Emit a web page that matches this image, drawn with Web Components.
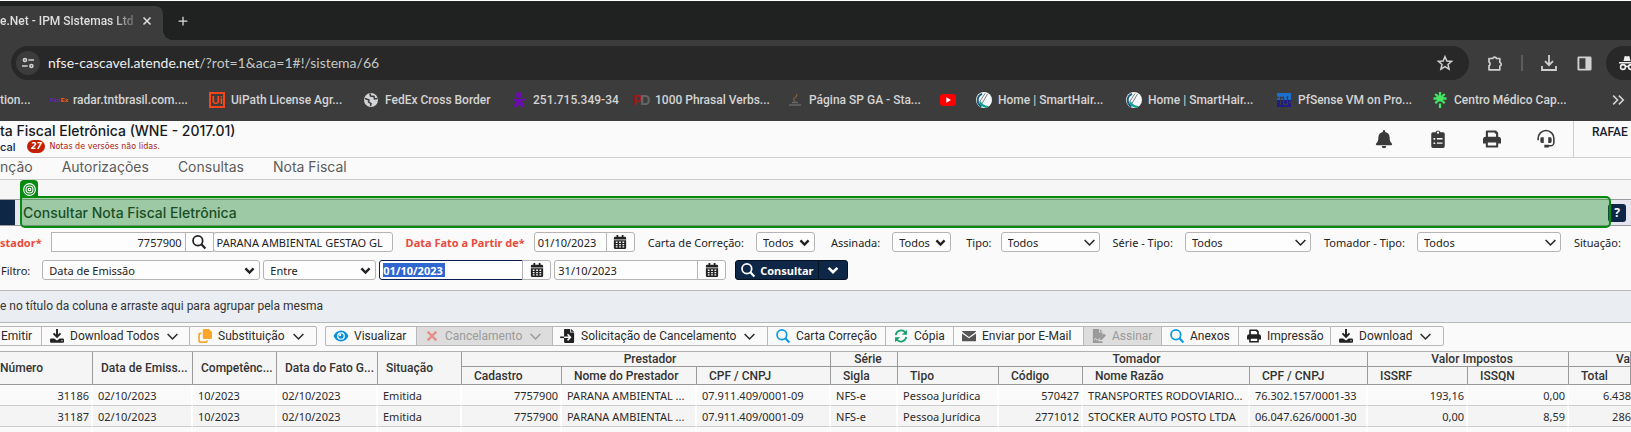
<!DOCTYPE html>
<html lang="pt-BR">
<head>
<meta charset="utf-8">
<title>Atende.Net - IPM Sistemas Ltda</title>
<style>
body{margin:0;background:#fafafa;overflow:hidden;font-family:"Noto Sans",sans-serif}
</style>
</head>
<body>
<app-window></app-window>
<script>
const ICONS = {
  close:'<path d="M4 4l8 8M12 4l-8 8" stroke="currentColor" stroke-width="1.8" fill="none"/>',
  plus:'<path d="M8 1v14M1 8h14" stroke="currentColor" stroke-width="2" fill="none"/>',
  tune:'<g fill="none" stroke="currentColor" stroke-width="2.200"><circle cx="4" cy="4" r="2"/><path d="M8.500 4H16M0 12h7.500"/><circle cx="12.500" cy="12" r="2"/></g>',
  star:'<path d="M8 1.700l1.900 4.300 4.700.4-3.600 3.100 1.100 4.600L8 11.700l-4.100 2.400L5 9.500 1.400 6.400l4.700-.4z" fill="none" stroke="currentColor" stroke-width="1.500"/>',
  puzzle:'<path d="M2 3.500h3.800a1.900 1.900 0 0 1 3.700 0h3.300v4a1.900 1.900 0 0 1 0 3.700v3.600H2v-4a2.200 2.200 0 0 0 0-3.800z" fill="none" stroke="currentColor" stroke-width="1.700" stroke-linejoin="round"/>',
  tray:'<path d="M8 0v10M4 6.200l4 4 4-4M1 11v4h14V11" fill="none" stroke="currentColor" stroke-width="1.800"/>',
  panel:'<path fill-rule="evenodd" d="M2 .5h12a1.500 1.500 0 0 1 1.500 1.500v12a1.500 1.500 0 0 1-1.500 1.500H2A1.500 1.500 0 0 1 .5 14V2A1.500 1.500 0 0 1 2 .5zm.5 2v11H9v-11z" fill="currentColor"/>',
  spy:'<path d="M4.500 6l1-4.500q.3-.8 1.200-.5L8 1.500 9.300 1q.9-.3 1.200.5l1 4.500zM0 7h16v1.500H0z" fill="currentColor"/><g fill="none" stroke="currentColor" stroke-width="1.600"><circle cx="4" cy="12" r="2.400"/><circle cx="12" cy="12" r="2.400"/><path d="M6.400 11.700q1.600-1 3.200 0"/></g>',
  globe:'<circle cx="8" cy="8" r="7" fill="#d2d4d7"/><path d="M2 6.500l4 1.500-.5 2 2.500 1.500L7.500 14M7 1.500L7.500 4l3.500.5.500 2.500 3-.5" fill="none" stroke="#3c3c3c" stroke-width="1.500"/>',
  person:'<g fill="#6a0dad"><circle cx="8" cy="3" r="3"/><path d="M2.500 6.200L6 7h4l3.500-.8.800 1.600L11 9.500l2.500 4.500-2.300 1.700L8 12.500l-3.200 3.200L2.500 14 5 9.500 1.700 7.800z"/></g>',
  java:'<path d="M9.500 2q1 2-1.500 3.500t0 4" stroke="#7c6440" fill="none" stroke-width="1.200"/><path d="M5 10.500h6M2 13h12" stroke="#66666a" fill="none" stroke-width="1.300"/>',
  tube:'<rect y="2" width="16" height="12" rx="3" fill="#f00"/><path d="M6.300 5.300v5.400L11 8z" fill="#fff"/>',
  comb:'<circle cx="8" cy="8" r="8" fill="#f5f8f9"/><path d="M5.500 14.500A7 7 0 0 1 6 1.800" fill="none" stroke="#1c5b7c" stroke-width="2"/><path d="M9 1.500L3.500 10M11.500 2L6 11.500" stroke="#777f88" stroke-width="1" fill="none"/><path d="M4 10q2 4.500 8 5" fill="none" stroke="#0aa093" stroke-width="2"/>',
  pf:'<path d="M1 1h14v7H1z" fill="#1b6fd0"/><path d="M1 8h14v7H1z" fill="#1e1a8c"/><path d="M4.500 13V5.500h3v7h4V4M1 5.500h2M13 10.500h2" stroke="#3c3c3c" stroke-width="1.400" fill="none"/>',
  flower:'<path d="M8 0v9.500M8 11.500V16M1.500 6.500h13M3.300 2l9.400 9.200M12.700 2l-9.400 9.200" stroke="#43e660" stroke-width="2.300" fill="none"/>',
  more:'<path d="M2.500 3L7.500 8l-5 5M9 3l5 5-5 5" fill="none" stroke="currentColor" stroke-width="1.800"/>',
  bell:'<path d="M8 0a1 1 0 0 1 1 1v.7c2.600.4 4 2.300 4 5 0 3 .8 4.300 2.200 5.500q.3 1-.7 1.300H1.500q-1-.3-.7-1.300C2.200 11 3 9.700 3 6.700c0-2.700 1.400-4.600 4-5V1a1 1 0 0 1 1-1zM6 14.300h4a2 2 0 0 1-4 0z" fill="currentColor"/>',
  clip:'<path fill-rule="evenodd" d="M3.500 2H5.800a2.300 2.300 0 0 1 4.400 0h2.300A1.500 1.500 0 0 1 14 3.500v11a1.500 1.500 0 0 1-1.500 1.500h-9A1.500 1.500 0 0 1 2 14.500v-11A1.500 1.500 0 0 1 3.500 2zM8 1.400a1 1 0 1 0 0 2 1 1 0 0 0 0-2zM4 7.200v1.500h1.500V7.200zm3 0v1.200h5V7.200zM4 11v1.500h1.500V11zm3 0v1.200h5V11z" fill="currentColor"/>',
  print:'<path fill-rule="evenodd" d="M2.500 6V1.500A1 1 0 0 1 3.500 .5h8L13.500 2.500V6A2.500 2.500 0 0 1 16 8.500V12h-2.500v3.500H2.500V12H0V8.500A2.500 2.500 0 0 1 2.500 6zm1.900-3.800V6h7.200V3.700L10 2.200zM4.300 11v2.700h7.400V11z" fill="currentColor"/>',
  headset:'<path d="M1 9V7.500a7 7 0 0 1 14 0V11a3 3 0 0 1-3 3H9" fill="none" stroke="currentColor" stroke-width="1.400"/><path d="M4.300 6.500H6v5H4.300A1.300 1.300 0 0 1 3 10.200V7.800a1.300 1.300 0 0 1 1.300-1.300zM10 6.500h1.700A1.300 1.300 0 0 1 13 7.800v2.400a1.300 1.300 0 0 1-1.300 1.300H10zM6.500 13h4v2.500h-4z" fill="currentColor"/>',
  target:'<g fill="none" stroke="currentColor" stroke-width="1.400"><circle cx="8" cy="8" r="7.200"/><circle cx="8" cy="8" r="4.300"/><circle cx="8" cy="8" r="1.600"/></g>',
  search:'<g fill="none" stroke="currentColor" stroke-width="2"><circle cx="6.700" cy="6.500" r="5.500"/><path d="M10.700 10.500L15.300 15.300" stroke-width="2.500"/></g>',
  calendar:'<path fill-rule="evenodd" d="M4 0h2v2h4V0h2v2h1.500A1.500 1.500 0 0 1 15 3.500V5H1V3.500A1.500 1.500 0 0 1 2.500 2H4zM1 6h14v8.500a1.500 1.500 0 0 1-1.500 1.500h-11A1.500 1.500 0 0 1 1 14.500zm2.200 1.500v1.600h2V7.500zm3.800 0v1.600h2V7.500zm3.800 0v1.600h2V7.500zM3.200 10.200v1.500h2v-1.500zm3.800 0v1.500h2v-1.500zm3.800 0v1.500h2v-1.500zM3.200 12.800v1.500h2v-1.500zm3.800 0v1.500h2v-1.500zm3.800 0v1.500h2v-1.500z" fill="currentColor"/>',
  chevron:'<path d="M2 5l6 6 6-6" fill="none" stroke="currentColor" stroke-width="1.900"/>',
  boldchevron:'<path d="M3 5.500L8 10.500 13 5.500" fill="none" stroke="currentColor" stroke-width="3"/>',
  download:'<path d="M8 0v8.500M4 5l4 4 4-4" fill="none" stroke="currentColor" stroke-width="2.200"/><path fill-rule="evenodd" d="M1.500 10.800h3.300L8 13l3.200-2.200h3.300A1.500 1.500 0 0 1 16 12.300v2.200a1.300 1.300 0 0 1-1.300 1.300H1.300A1.300 1.300 0 0 1 0 14.500v-2.200a1.500 1.500 0 0 1 1.500-1.500zm11.500 2v1.200h1.400v-1.200z" fill="currentColor"/>',
  copy:'<path d="M7 0h5.500L16 3.500V10a1.500 1.500 0 0 1-1.500 1.500H7A1.500 1.500 0 0 1 5.500 10V1.500A1.500 1.500 0 0 1 7 0z" fill="currentColor"/><path d="M4 5H2.800A1.500 1.500 0 0 0 1.200 6.500v7A1.500 1.500 0 0 0 2.800 15H9a1.300 1.300 0 0 0 1.300-1.500V13" fill="none" stroke="currentColor" stroke-width="1.900"/>',
  eye:'<path d="M8 1.800c3.700 0 7 2.500 8.500 6.200-1.500 3.700-4.800 6.200-8.500 6.200S1 11.700-.5 8C1 4.300 4.300 1.800 8 1.800z" fill="currentColor"/><circle cx="8" cy="8" r="4.400" fill="#fff"/><circle cx="8" cy="8" r="3" fill="currentColor"/><circle cx="7" cy="7" r="1.200" fill="#fff"/>',
  cross:'<path d="M3 3l10 10M13 3L3 13" stroke="currentColor" stroke-width="2.600" fill="none"/>',
  fileimport:'<path d="M4 0h6.500v4H15v10.500a1.500 1.500 0 0 1-1.500 1.500h-9A1.500 1.500 0 0 1 3.500 14.500V.8Q3.500 0 4 0zM11.500 0L15 3.200h-3.500z" fill="currentColor"/><path d="M3.500 9.500h7M7.500 6l3.300 3.500L7.500 13" fill="none" stroke="#fafafa" stroke-width="1.700"/><path d="M-1 9.500h4.500" stroke="currentColor" stroke-width="1.800"/>',
  sync:'<path d="M2 7a6.200 6.200 0 0 1 11-3M14 9a6.200 6.200 0 0 1-11 3" fill="none" stroke="currentColor" stroke-width="2"/><path d="M14.800.8v5.700H9zM1.200 15.200V9.500H7z" fill="currentColor"/>',
  mail:'<path d="M0 3.200Q0 2.200 1 2.200h14q1 0 1 1L8 9zM0 5l8 5.700L16 5v8q0 1-1 1H1q-1 0-1-1z" fill="currentColor"/>',
  sign:'<path d="M1 0h7v4h4v3L7.500 11.500V14H12v2H1zM9 0l3 3H9z" fill="currentColor"/><path d="M2.500 12.500l1.500-2 1.200 2h2" stroke="#ddd" fill="none"/><path d="M13.500 5L16 7.500l-5 5H8.800v-2.300z" fill="currentColor"/>'
};

/* Registers an element whose shadow root is cloned from a template; {{name}} is replaced by the attribute value. */
function element(name, markup) {
  customElements.define(name, class extends HTMLElement {
    connectedCallback() {
      if (this.shadowRoot) return;
      const t = document.createElement('template');
      t.innerHTML = '<style>*{box-sizing:border-box}</style>' +
        markup.replace(/\{\{([\w-]+)\}\}/g, (_, a) => this.getAttribute(a) || '');
      this.attachShadow({mode: 'open'}).append(t.content.cloneNode(true));
    }
  });
}

customElements.define('ui-icon', class extends HTMLElement {
  connectedCallback() {
    if (this.shadowRoot) return;
    this.attachShadow({mode: 'open'}).innerHTML =
      '<style>:host{display:inline-flex;flex:none;width:16px;height:16px}svg{width:100%;height:100%;overflow:visible}</style>' +
      '<svg viewBox="0 0 16 16" aria-hidden="true">' + (ICONS[this.getAttribute('name')] || '') + '</svg>';
  }
});

element('browser-tabs', `<style>
:host{display:flex;height:40px;border-top:1px solid #fff;background:#202221;color:#dedede;padding-top:5px;font:500 12px Roboto,sans-serif}
.tab{position:relative;width:163px;display:flex;align-items:center;justify-content:space-between;background:#3c3c3c;border-radius:0 8px 0 0;padding:0 9px 5px 0}
.tab::after{content:"";position:absolute;left:100%;bottom:0;width:10px;height:10px;background:radial-gradient(circle at 100% 0,transparent 10px,#3c3c3c 10px)}
.name{flex:none;white-space:nowrap;-webkit-mask:linear-gradient(90deg,#000 84%,#0004);mask:linear-gradient(90deg,#000 84%,#0004)}
button{border:0;padding:0;margin:0;background:none;color:inherit;display:flex}
.x ui-icon{width:14px;height:14px}
.new{align-self:center;margin:0 0 5px 15px}.new ui-icon{width:10px;height:10px}
</style><div class="tab"><span class="name">e.Net - IPM Sistemas Ltd</span><button class="x" aria-label="Fechar guia"><ui-icon name="close"></ui-icon></button></div>
<button class="new" aria-label="Nova guia"><ui-icon name="plus"></ui-icon></button>`);

element('browser-address', `<style>
:host{display:flex;height:40px;align-items:flex-end;background:#3c3c3c;color:#d0d0d0;padding-left:11px;overflow:hidden}
.box{flex:1;display:flex;align-items:center;height:34px;border-radius:17px;background:#282828;padding:0 16px 0 5px}
.site{flex:none;width:24px;height:24px;border-radius:50%;background:#3c3c3c;display:flex;align-items:center;justify-content:center;margin-right:8px}
.site ui-icon{width:12px;height:12px}
.url{flex:1;font:14px/18px Lato,sans-serif;white-space:nowrap;color:#c4c7c5;padding-bottom:1px}.url b{font-weight:400;color:#eee}
button{border:0;padding:0;background:none;color:inherit;display:flex;flex:none}
.tools{flex:none;display:flex;align-items:center;height:34px;width:162px;padding-left:18px}
.tools i{flex:none;width:2px;height:16px;background:#5c5c5c;margin:0 18px}
.inc{margin-left:14px;width:60px;flex:none;height:34px;border-radius:17px;background:#282828;display:flex;align-items:center;padding-left:13px;color:#eee}
.gap{margin-left:20px}.gap ui-icon{width:15px;height:15px}
</style><div class="box"><button class="site" aria-label="Informações do site"><ui-icon name="tune"></ui-icon></button>
<span class="url"><b>nfse-cascavel.atende.net</b>/?rot=1&amp;aca=1#!/sistema/66</span><button aria-label="Favorito"><ui-icon name="star"></ui-icon></button></div>
<div class="tools"><button aria-label="Extensões"><ui-icon name="puzzle"></ui-icon></button><i></i><button aria-label="Downloads"><ui-icon name="tray"></ui-icon></button>
<button class="gap" aria-label="Painel lateral"><ui-icon name="panel"></ui-icon></button><div class="inc"><ui-icon name="spy"></ui-icon></div></div>`);

element('book-mark', `<style>
:host{display:flex;align-items:center;white-space:nowrap;overflow:hidden}
a{display:flex;align-items:center;gap:6px;color:inherit;text-decoration:none}
</style><a href="#"><slot name="icon"><ui-icon name="{{icon}}"></ui-icon></slot><slot></slot></a>`);

element('bookmark-bar', `<style>
:host{display:grid;grid-template-columns:50px 159px 154px 148px 122px 154px 153px 36px 150px 150px 156px minmax(0,1fr) auto;height:41px;padding-bottom:1px;background:#3c3c3c;color:#d4d4d4;font:500 12px Roboto,sans-serif}
.fx{width:17px;font:700 6px "Liberation Sans",sans-serif;color:#6a25b5}.fx b{color:#f60}
.ui{width:16px;height:16px;border:2px solid #fa4616;color:#fa4616;font:700 11px/12px "Liberation Sans",sans-serif;text-align:center}
.pd{width:16px;font:700 14px "Liberation Sans",sans-serif;color:#a01818;display:flex}.pd b{color:#666;margin-left:-2px}
button{border:0;background:none;color:inherit;padding:0;margin-right:6px;align-self:center;display:flex}button ui-icon{width:14px;height:14px}
.cut{margin-left:-6px}
</style><book-mark><span slot="icon"></span><span class="cut">tion...</span></book-mark>
<book-mark><span slot="icon" class="fx">Fed<b>Ex</b></span>radar.tntbrasil.com....</book-mark>
<book-mark><span slot="icon" class="ui">Ui</span>UiPath License Agr...</book-mark>
<book-mark icon="globe">FedEx Cross Border</book-mark><book-mark icon="person">251.715.349-34</book-mark>
<book-mark><span slot="icon" class="pd">P<b>D</b></span>1000 Phrasal Verbs...</book-mark>
<book-mark icon="java">Página SP GA - Sta...</book-mark><book-mark icon="tube"></book-mark>
<book-mark icon="comb">Home | SmartHair...</book-mark><book-mark icon="comb">Home | SmartHair...</book-mark>
<book-mark icon="pf">PfSense VM on Pro...</book-mark><book-mark icon="flower">Centro Médico Cap...</book-mark>
<button aria-label="Mais favoritos"><ui-icon name="more"></ui-icon></button>`);

element('app-header', `<style>
:host{display:flex;height:37px;border-bottom:1px solid #d0d0d0;background:#fafafa;color:#16181c;font-family:Inter,sans-serif;white-space:nowrap;overflow:hidden}
.t{flex:1}h1{margin:0;font:500 14px/19px Inter,sans-serif}
.s{display:flex;align-items:center;height:13px;font:500 11px/12px Inter,sans-serif;color:#0f2747}
.n{margin:0 4px 0 12px;width:18px;height:13px;border-radius:7px;background:#c22000;color:#fff;font:italic 700 8px/13px "DejaVu Sans",sans-serif;text-align:center}
.m{font:8px "DejaVu Sans",sans-serif;color:#b01810}
nav{display:flex;align-items:center;gap:36px;padding-right:18px;color:#3a3a3a}button{border:0;background:none;padding:0;color:inherit;display:flex}nav ui-icon{width:18px;height:18px}
.u{width:58px;border-left:1px solid #d0d0d0;padding-left:18px;font:500 12px/22px Roboto,sans-serif;color:#16202e}
</style><div class="t"><h1>ta Fiscal Eletrônica (WNE - 2017.01)</h1><div class="s">cal<span class="n">27</span><span class="m">Notas de versões não lidas.</span></div></div>
<nav><button aria-label="Avisos"><ui-icon name="bell"></ui-icon></button><button aria-label="Tarefas"><ui-icon name="clip"></ui-icon></button><button aria-label="Imprimir"><ui-icon name="print"></ui-icon></button><button aria-label="Suporte"><ui-icon name="headset"></ui-icon></button></nav><div class="u">RAFAE</div>`);

element('app-menu', `<style>
:host{display:flex;height:22px;gap:29px;background:#fafafa;border-bottom:1px solid #ccc;font:14px/18px Inter,sans-serif;color:#5c5c5c}
a{color:inherit;text-decoration:none}
</style><a href="#">nção</a><a href="#">Autorizações</a><a href="#">Consultas</a><a href="#">Nota Fiscal</a>`);

element('page-title', `<style>
:host{display:block;background:#f6f6f6;padding-top:19px}
.bar{position:relative;display:flex;align-items:center;height:27px;border:solid #9a9aa0;border-width:1px 0;background:#e6e6ee;padding-right:5px}
.side{width:15px;align-self:stretch;background:#0f2747}
h2{flex:1;margin:0 0 0 8px;font:500 14px/24px Inter,sans-serif;color:#1c2c30}
.help{border:0;border-radius:3px;background:#0f2747;color:#fff;width:18px;height:18px;padding:0;font:700 12px/18px "Noto Sans",sans-serif}
.mark{position:absolute;left:20px;right:20px;top:-4px;bottom:-3px;border:2px solid #068a10;border-radius:0 5px 5px 5px;background:rgba(20,146,24,.34)}
.tag{position:absolute;left:-2px;bottom:100%;width:18px;height:18px;border-radius:4px 4px 0 0;background:#068a10;color:#fff;display:flex;align-items:center;justify-content:center}
.tag ui-icon{width:13px;height:13px}
</style><div class="bar"><span class="side"></span><h2>Consultar Nota Fiscal Eletrônica</h2><button class="help">?</button><div class="mark"><span class="tag"><ui-icon name="target"></ui-icon></span></div></div>`);

const control = 'height:20px;border:1px solid #b4b4b4;background:#fdfdfd;color:#222;font:11px "Noto Sans",sans-serif;margin:0;outline:0;';
element('select-field', `<style>
:host{display:flex;flex:none;align-items:center}
label{font:11px "Noto Sans",sans-serif;white-space:nowrap;color:#222}label:empty{display:none}
div{display:grid;width:var(--w);margin-left:var(--gap,0)}
select{${control}grid-area:1/1;width:100%;appearance:none;border-radius:3px;padding:0 0 0 6px}
ui-icon{grid-area:1/1;justify-self:end;align-self:center;width:13px;height:13px;margin-right:4px;pointer-events:none;color:#222}
</style><label for="s">{{label}}</label><div><select id="s" aria-label="{{label}}{{name}}"><option>{{value}}</option></select><ui-icon name="{{arrow}}"></ui-icon></div>`);

element('text-field', `<style>
:host{display:flex;flex:none;align-items:center}
label{font:700 11px "Noto Sans",sans-serif;color:#e84c3d;white-space:nowrap;margin-right:var(--gap,0)}label:empty{display:none}
input{${control}width:var(--w);border-radius:3px;padding:0 3px;text-align:var(--align,left)}
:host([joined]) input{border-radius:3px 0 0 3px}
:host([focused]) input{border-color:#0a1f52;color:#fff;font-weight:700;background:linear-gradient(#2f66cf,#2f66cf) 3px 2px/62px 14px no-repeat #fff}
button{${control}width:29px;margin-left:-1px;padding:0;border-radius:0 3px 3px 0;display:flex;align-items:center;justify-content:center}
button ui-icon{width:14px;height:14px}:host(:not([button])) button{display:none}:host([mid]) button,:host([mid]) input{border-radius:0}
</style><label for="i">{{label}}</label><input id="i" value="{{value}}" aria-label="{{label}}{{name}}"><button aria-label="Abrir"><ui-icon name="{{button}}"></ui-icon></button>`);

element('filter-form', `<style>
:host{display:block;background:#fafafa;padding:6px 0 10px;overflow:hidden}
.row{display:flex;align-items:center;height:20px}.row+.row{margin-top:8px}
label{font:11px "Noto Sans",sans-serif;white-space:nowrap;color:#222}
.go{flex:none;display:flex;height:20px;margin-left:9px}
.go button{border:1px solid #05101f;background:#0f2747;color:#fff;height:20px;padding:0;display:flex;align-items:center;justify-content:center;font:700 11px "Noto Sans",sans-serif}
.go button:first-child{width:84px;gap:5px;border-radius:3px 0 0 3px}.go button:last-child{width:30px;margin-left:-1px;border-radius:0 3px 3px 0}.go ui-icon{width:14px;height:14px}
</style><div class="row">
<text-field label="stador*" value="7757900" button="search" joined mid style="--w:135px;--gap:9px;--align:right"></text-field>
<text-field name="Nome" value="PARANA AMBIENTAL GESTAO GL" style="--w:180px;margin-left:-1px"></text-field>
<text-field label="Data Fato a Partir de*" value="01/10/2023" button="calendar" joined style="--w:73px;--gap:9px;margin-left:13px"></text-field>
<select-field label="Carta de Correção:" value="Todos" arrow="boldchevron" style="--w:59px;--gap:12px;margin-left:13px"></select-field>
<select-field label="Assinada:" value="Todos" arrow="boldchevron" style="--w:59px;--gap:12px;margin-left:16px"></select-field>
<select-field label="Tipo:" value="Todos" arrow="chevron" style="--w:99px;--gap:9px;margin-left:15px"></select-field>
<select-field label="Série - Tipo:" value="Todos" arrow="chevron" style="--w:126px;--gap:12px;margin-left:13px"></select-field>
<select-field label="Tomador - Tipo:" value="Todos" arrow="chevron" style="--w:144px;--gap:12px;margin-left:13px"></select-field>
<label style="margin-left:13px">Situação:</label></div>
<div class="row"><select-field label="Filtro:" name="" value="Data de Emissão" arrow="boldchevron" style="--w:218px;--gap:12px;margin-left:1px"></select-field>
<select-field name="Operador" value="Entre" arrow="boldchevron" style="--w:113px;margin-left:3px"></select-field>
<text-field name="De" value="01/10/2023" button="calendar" joined focused style="--w:144px;margin-left:3px"></text-field>
<text-field name="Até" value="31/10/2023" button="calendar" joined style="--w:144px;margin-left:3px"></text-field>
<div class="go"><button><ui-icon name="search"></ui-icon>Consultar</button><button aria-label="Mais opções"><ui-icon name="boldchevron"></ui-icon></button></div></div>`);

element('tool-button', `<style>
:host{display:block;flex:none;width:var(--w)}
button{width:100%;height:20px;border:1px solid #b8b8b8;border-right-width:0;background:#fafafa;color:#2b2b2b;padding:0 0 0 8px;display:flex;align-items:center;gap:6px;font:12px Roboto,sans-serif;white-space:nowrap}
:host([last]) button{border-right-width:1px;border-radius:0 2px 2px 0}:host([first]) button{border-radius:2px 0 0 2px}
button:disabled{background:#ddd;color:#9a9a9a}
.i{width:14px;height:14px;color:var(--c,#222)}.v{width:13px;height:13px;margin-left:1px;display:none}:host([menu]) .v{display:inline-flex}
:host([plain]) button{padding-left:1px;border-left:0}:host([plain]) .i{display:none}
</style><button><ui-icon class="i" name="{{icon}}"></ui-icon><slot></slot><ui-icon class="v" name="chevron"></ui-icon></button>`);

element('action-bar', `<style>
:host{display:flex;padding:3px 0 5px;background:#fafafa;overflow:hidden}
</style><tool-button plain style="--w:41px">Emitir</tool-button><tool-button icon="download" menu style="--w:148px">Download Todos</tool-button>
<tool-button icon="copy" menu last style="--w:128px;--c:#f9a62b">Substituição</tool-button>
<tool-button icon="eye" first style="--w:91px;--c:#0b8ed8;margin-left:8px">Visualizar</tool-button><tool-button icon="cross" menu off style="--w:136px;--c:#e58f88">Cancelamento</tool-button>
<tool-button icon="fileimport" menu style="--w:215px">Solicitação de Cancelamento</tool-button><tool-button icon="search" style="--w:118px;--c:#0b9be3">Carta Correção</tool-button>
<tool-button icon="sync" style="--w:68px;--c:#17a06b">Cópia</tool-button><tool-button icon="mail" style="--w:130px;--c:#555">Enviar por E-Mail</tool-button>
<tool-button icon="sign" off style="--w:78px;--c:#9a9a9a">Assinar</tool-button><tool-button icon="search" style="--w:77px;--c:#0b9be3">Anexos</tool-button>
<tool-button icon="print" style="--w:92px">Impressão</tool-button><tool-button icon="download" menu last style="--w:114px">Download</tool-button>`);

element('group-hint', `<style>
:host{display:block;height:33px;border:solid #b8b8b8;border-width:1px 0;background:#eaedf2;font:12px/31px Roboto,sans-serif;color:#333;white-space:nowrap}
</style><slot></slot>`);

const widths = [93,100,84,101,84,100,135,134,67,101,84,167,118,100,101];
const rows = [
  ['31186','02/10/2023','10/2023','02/10/2023','Emitida','7757900','PARANA AMBIENTAL ...','07.911.409/0001-09','NFS-e','Pessoa Jurídica','570427','TRANSPORTES RODOVIARIO...','76.302.157/0001-33','193,16','0,00','6.438'],
  ['31187','02/10/2023','10/2023','02/10/2023','Emitida','7757900','PARANA AMBIENTAL ...','07.911.409/0001-09','NFS-e','Pessoa Jurídica','2771012','STOCKER AUTO POSTO LTDA','06.047.626/0001-30','0,00','8,59','286'],
  Array(16).fill('')
];
const numeric = [0,5,10,13,14];
element('invoice-grid', `<style>
:host{display:block}
table{width:100%;table-layout:fixed;border-collapse:separate;border-spacing:0;white-space:nowrap;border-top:1px solid #b0b0b0}
th{font:500 12px/14px Roboto,sans-serif;color:#333;background:#f5f5f5;border:solid #999;border-width:0 1px 1px 0;padding:0 0 0 12px;text-align:left;overflow:hidden}
th.g{text-align:center;padding:0 0 0 8px}th.e{padding-left:8px}th.z{padding-left:0}th.r{text-align:right;padding:0}
tr.a th{height:15px}tr.b th{height:18px}
td{height:21px;padding:0 4px 0 5px;font:11px/19px "Noto Sans",sans-serif;color:#2b2b2b;border:solid #fff;border-width:0 2px 0 0;border-bottom:1px solid #ccc;overflow:hidden;background:#fafafa}
tr:nth-child(even) td{background:#f4f4f4}td.n{text-align:right;padding-right:2px}td.l{text-align:right;padding:0;border-right:0}
</style><table><colgroup>${widths.map(w => `<col style="width:${w}px">`).join('')}<col></colgroup><thead>
<tr class="a"><th rowspan="2" class="z">Número</th><th rowspan="2" class="e">Data de Emiss...</th><th rowspan="2" class="e">Competênc...</th><th rowspan="2" class="e">Data do Fato G...</th><th rowspan="2" class="e">Situação</th>
<th colspan="3" class="g">Prestador</th><th class="g">Série</th><th colspan="4" class="g">Tomador</th><th colspan="2" class="g">Valor Impostos</th><th class="r">Va</th></tr>
<tr class="b"><th>Cadastro</th><th>Nome do Prestador</th><th>CPF / CNPJ</th><th>Sigla</th><th>Tipo</th><th>Código</th><th>Nome Razão</th><th>CPF / CNPJ</th><th>ISSRF</th><th>ISSQN</th><th>Total</th></tr></thead>
<tbody>${rows.map(r => '<tr>' + r.map((c, i) => `<td class="${i === 15 ? 'l' : numeric.includes(i) ? 'n' : ''}">${c}</td>`).join('') + '</tr>').join('')}</tbody></table>`);

element('app-window', `<style>:host{display:block}</style>
<browser-tabs></browser-tabs><browser-address></browser-address><bookmark-bar></bookmark-bar>
<app-header></app-header><app-menu></app-menu><page-title></page-title><filter-form></filter-form>
<group-hint>e no título da coluna e arraste aqui para agrupar pela mesma</group-hint><action-bar></action-bar><invoice-grid></invoice-grid>`);

/* The "off" attribute disables the inner button. */
for (const b of document.querySelector('app-window').shadowRoot.querySelector('action-bar').shadowRoot.querySelectorAll('tool-button[off]'))
  b.shadowRoot.querySelector('button').disabled = true;
</script>
</body>
</html>
